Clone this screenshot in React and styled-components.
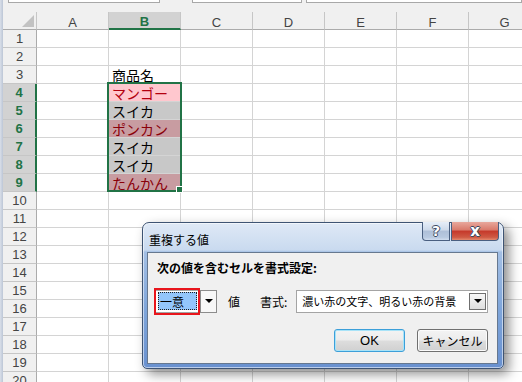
import React from "react";
import styled, { createGlobalStyle } from "styled-components";

const GlobalStyle = createGlobalStyle`
  html, body {
    margin: 0;
    padding: 0;
    background: #ffffff;
  }
  body {
    width: 522px;
    height: 382px;
    overflow: hidden;
    font-family: "Liberation Sans", "Noto Sans CJK JP", sans-serif;
  }
`;

const JP = `"Noto Sans CJK JP", "Liberation Sans", sans-serif`;
const GREEN = "#217346";

const Page = styled.div`
  position: relative;
  width: 522px;
  height: 382px;
  overflow: hidden;
  display: flex;
`;

const LeftEdge = styled.div`
  width: 3px;
  flex: none;
  background: linear-gradient(to right, #d9dfe9, #bcc6d6);
`;

const Main = styled.div`
  flex: 1;
  display: flex;
  flex-direction: column;
  min-width: 0;
`;

const TopBand = styled.div`
  height: 12px;
  flex: none;
  display: flex;
  align-items: flex-start;
  background: #f0f0f0;
  padding-left: 5px;
  gap: 32px;
`;

const FormulaBox = styled.div`
  height: 2px;
  width: ${({ w }) => w};
  flex: ${({ grow }) => (grow ? 1 : "none")};
  margin-left: ${({ ml }) => ml || 0};
  background: #fff;
  border: 1px solid #a8a8a8;
  border-top: none;
`;

const Sheet = styled.div`
  position: relative;
  display: grid;
  grid-template-columns: 34px repeat(7, 72px);
  grid-auto-rows: 18px;
  background: #fff;
`;

const Corner = styled.div`
  background: #f0f0f0;
  border-right: 1px solid #c6c6c6;
  border-bottom: 1px solid #ababab;
  box-sizing: border-box;
  position: relative;

  &::after {
    content: "";
    position: absolute;
    right: 2px;
    bottom: 2px;
    width: 12px;
    height: 12px;
    background: #c2c2c2;
    clip-path: polygon(100% 0, 100% 100%, 0 100%);
  }
`;

const ColHead = styled.div`
  box-sizing: border-box;
  display: flex;
  align-items: center;
  justify-content: center;
  padding-top: 3px;
  font-size: 13px;
  color: ${({ sel }) => (sel ? GREEN : "#444")};
  font-weight: ${({ sel }) => (sel ? 700 : 400)};
  background: ${({ sel }) => (sel ? "#d2d2d2" : "#f0f0f0")};
  border-right: 1px solid #c6c6c6;
  border-bottom: ${({ sel }) => (sel ? `2px solid ${GREEN}` : "1px solid #ababab")};
`;

const RowHead = styled.div`
  box-sizing: border-box;
  display: flex;
  align-items: center;
  justify-content: center;
  font-size: 13px;
  color: ${({ sel }) => (sel ? GREEN : "#444")};
  font-weight: ${({ sel }) => (sel ? 700 : 400)};
  background: ${({ sel }) => (sel ? "#d2d2d2" : "#f0f0f0")};
  border-right: ${({ sel }) => (sel ? `2px solid ${GREEN}` : "1px solid #ababab")};
  border-bottom: 1px solid #c6c6c6;
`;

const Cell = styled.div`
  box-sizing: border-box;
  display: flex;
  align-items: center;
  padding: 1px 0 0 3px;
  font-family: ${JP};
  font-size: 14px;
  white-space: nowrap;
  overflow: hidden;
  color: ${({ color }) => color || "#000"};
  background: ${({ fill }) => fill || "#fff"};
  border-right: 1px solid #d4d4d4;
  border-bottom: 1px solid #d4d4d4;
`;

const Selection = styled.div`
  position: absolute;
  grid-column: 3 / 4;
  grid-row: 5 / 11;
  top: -2px;
  left: -2px;
  right: -1px;
  bottom: 0;
  border: 2px solid ${GREEN};
  pointer-events: none;
`;

const FillHandle = styled.div`
  position: absolute;
  right: -3px;
  bottom: -3px;
  width: 5px;
  height: 5px;
  background: ${GREEN};
  border: 1px solid #fff;
`;

/* dialog */

const Dialog = styled.div`
  position: absolute;
  left: 142px;
  top: 222px;
  width: 362px;
  height: 147px;
  box-sizing: border-box;
  display: flex;
  flex-direction: column;
  padding: 0 5px 4px 4px;
  border: 1px solid #3e5473;
  border-radius: 7px 7px 5px 5px;
  background: linear-gradient(#dfe9f6, #c9daef 27px, #a3bfe4 29px, #7ea5da 60%, #6991d0);
  box-shadow: 5px 5px 12px rgba(0, 0, 0, 0.45), inset 0 0 0 1px rgba(255, 255, 255, 0.55);
`;

const TitleBar = styled.div`
  height: 29px;
  flex: none;
  display: flex;
  justify-content: space-between;
  align-items: flex-start;
`;

const Title = styled.div`
  margin: 9px 0 0 2px;
  font-family: ${JP};
  font-size: 12px;
  line-height: 16px;
  color: #000;
`;

const CaptionButtons = styled.div`
  display: flex;
  margin: -1px -1px 0 0;
  gap: 1px;
`;

const CaptionButton = styled.div`
  width: ${({ w }) => w}px;
  height: 19px;
  box-sizing: border-box;
  display: flex;
  align-items: center;
  justify-content: center;
  border: 1px solid #4a5f80;
  border-top: none;
  border-radius: ${({ close }) => (close ? "0 0 4px 0" : "0 0 0 4px")};
  background: ${({ close }) =>
    close
      ? "linear-gradient(#e8a89c, #d9796a 45%, #c5382a 50%, #cf5a44 85%, #e48a6f)"
      : "linear-gradient(#e6eef8, #cdd9ea 45%, #aebfd8 50%, #b8c9e0 85%, #d2def0)"};
  color: #fff;
  font-family: "DejaVu Sans", sans-serif;
  font-weight: 700;
  font-size: ${({ close }) => (close ? 15 : 14)}px;
  line-height: 1;
  text-shadow: 1px 0 0 #3b4a63, -1px 0 0 #3b4a63, 0 1px 0 #3b4a63, 0 -1px 0 #3b4a63;
`;

const Panel = styled.div`
  flex: 1;
  display: flex;
  flex-direction: column;
  padding: 7px 9px 9px 8px;
  background: #f0f0f0;
  border: 1px solid #66788f;
`;

const Heading = styled.div`
  margin-left: 1px;
  font-family: ${JP};
  font-weight: 700;
  font-size: 12px;
  line-height: 16px;
  color: #000;
`;

const FieldRow = styled.div`
  display: flex;
  align-items: center;
  margin-top: 13px;
  height: 24px;
`;

const Combo = styled.div`
  position: relative;
  display: flex;
  flex: none;
  width: ${({ w }) => w}px;
  height: 23px;
  box-sizing: border-box;
  margin-left: ${({ ml }) => ml || 0}px;
  border: 1px solid #a4a4a4;
  background: #fff;
`;

const ComboValue = styled.div`
  flex: 1;
  min-width: 0;
  display: flex;
  align-items: center;
  font-family: ${JP};
  font-size: ${({ small }) => (small ? 11 : 12)}px;
  color: #000;
  white-space: nowrap;
  padding-left: ${({ small }) => (small ? 5 : 0)}px;
`;

const Chosen = styled.div`
  margin: 2px 3px 2px 2px;
  height: 18px;
  flex: 1;
  box-sizing: border-box;
  display: flex;
  align-items: center;
  padding-left: 1px;
  background: #93c6fb;
  border: 1px dotted #202020;
`;

const DropButton = styled.div`
  width: 17px;
  flex: none;
  box-sizing: border-box;
  display: flex;
  align-items: center;
  justify-content: center;
  margin: ${({ inset }) => (inset ? "2px 1px 2px 0" : "-1px -1px -1px 0")};
  border: 1px solid ${({ inset }) => (inset ? "#6f6f6f" : "#8c8c8c")};
  background: ${({ inset }) => (inset ? "linear-gradient(#f7f7f7, #dedede)" : "#f7f7f7")};

  &::after {
    content: "";
    border-left: 4px solid transparent;
    border-right: 4px solid transparent;
    border-top: 4px solid #000;
  }
`;

const Highlight = styled.div`
  position: absolute;
  left: -2px;
  top: -3px;
  width: 46px;
  height: 27px;
  box-sizing: border-box;
  border: 2px solid #e8151c;
  pointer-events: none;
`;

const Label = styled.span`
  flex: none;
  white-space: nowrap;
  margin-left: ${({ ml }) => ml}px;
  font-family: ${JP};
  font-size: 12px;
  color: #000;
`;

const ButtonRow = styled.div`
  display: flex;
  justify-content: flex-end;
  gap: 12px;
  margin-top: 16px;
`;

const Button = styled.div`
  width: 71px;
  height: 23px;
  box-sizing: border-box;
  display: flex;
  align-items: center;
  justify-content: center;
  border-radius: 3px;
  border: 1px solid ${({ primary }) => (primary ? "#3c9fd9" : "#707070")};
  box-shadow: ${({ primary }) => (primary ? "inset 0 0 0 1px #a8e3f8" : "inset 0 0 0 1px #fbfbfb")};
  background: linear-gradient(#f3f3f3, #ececec 48%, #dddddd 52%, #d0d0d0);
  font-family: ${({ primary }) => (primary ? `"Liberation Sans", sans-serif` : JP)};
  font-size: ${({ primary }) => (primary ? 13 : 12)}px;
  color: #000;
`;

const cellData = {
  3: { text: "商品名" },
  4: { text: "マンゴー", fill: "#ffc7ce", color: "#b3000f" },
  5: { text: "スイカ", fill: "#c8c8c8" },
  6: { text: "ポンカン", fill: "#c89ca1", color: "#8a0009" },
  7: { text: "スイカ", fill: "#c8c8c8" },
  8: { text: "スイカ", fill: "#c8c8c8" },
  9: { text: "たんかん", fill: "#c89ca1", color: "#8a0009" },
};

const COLS = ["A", "B", "C", "D", "E", "F", "G"];
const ROWS = Array.from({ length: 20 }, (_, i) => i + 1);

export default function App() {
  return (
    <>
      <GlobalStyle />
      <Page>
        <LeftEdge />
        <Main>
          <TopBand>
            <FormulaBox w="150px" />
            <FormulaBox w="108px" />
            <FormulaBox grow ml="-28px" />
          </TopBand>
          <Sheet>
            <Corner />
            {COLS.map((c) => (
              <ColHead key={c} sel={c === "B"}>
                {c}
              </ColHead>
            ))}
            {ROWS.map((r) => {
              const sel = r >= 4 && r <= 9;
              return (
                <React.Fragment key={r}>
                  <RowHead sel={sel}>{r}</RowHead>
                  {COLS.map((c) => {
                    const d = c === "B" ? cellData[r] : null;
                    return (
                      <Cell key={c} fill={d && d.fill} color={d && d.color}>
                        {d ? d.text : ""}
                      </Cell>
                    );
                  })}
                </React.Fragment>
              );
            })}
            <Selection>
              <FillHandle />
            </Selection>
          </Sheet>
        </Main>

        <Dialog>
          <TitleBar>
            <Title>重複する値</Title>
            <CaptionButtons>
              <CaptionButton w={28}>?</CaptionButton>
              <CaptionButton w={48} close>
                x
              </CaptionButton>
            </CaptionButtons>
          </TitleBar>
          <Panel>
            <Heading>次の値を含むセルを書式設定:</Heading>
            <FieldRow>
              <Combo w={62} ml={-1}>
                <ComboValue>
                  <Chosen>一意</Chosen>
                </ComboValue>
                <DropButton />
                <Highlight />
              </Combo>
              <Label ml={11}>値</Label>
              <Label ml={20}>書式:</Label>
              <Combo w={192} ml={9}>
                <ComboValue small>濃い赤の文字、明るい赤の背景</ComboValue>
                <DropButton inset />
              </Combo>
            </FieldRow>
            <ButtonRow>
              <Button primary>OK</Button>
              <Button>キャンセル</Button>
            </ButtonRow>
          </Panel>
        </Dialog>
      </Page>
    </>
  );
}
